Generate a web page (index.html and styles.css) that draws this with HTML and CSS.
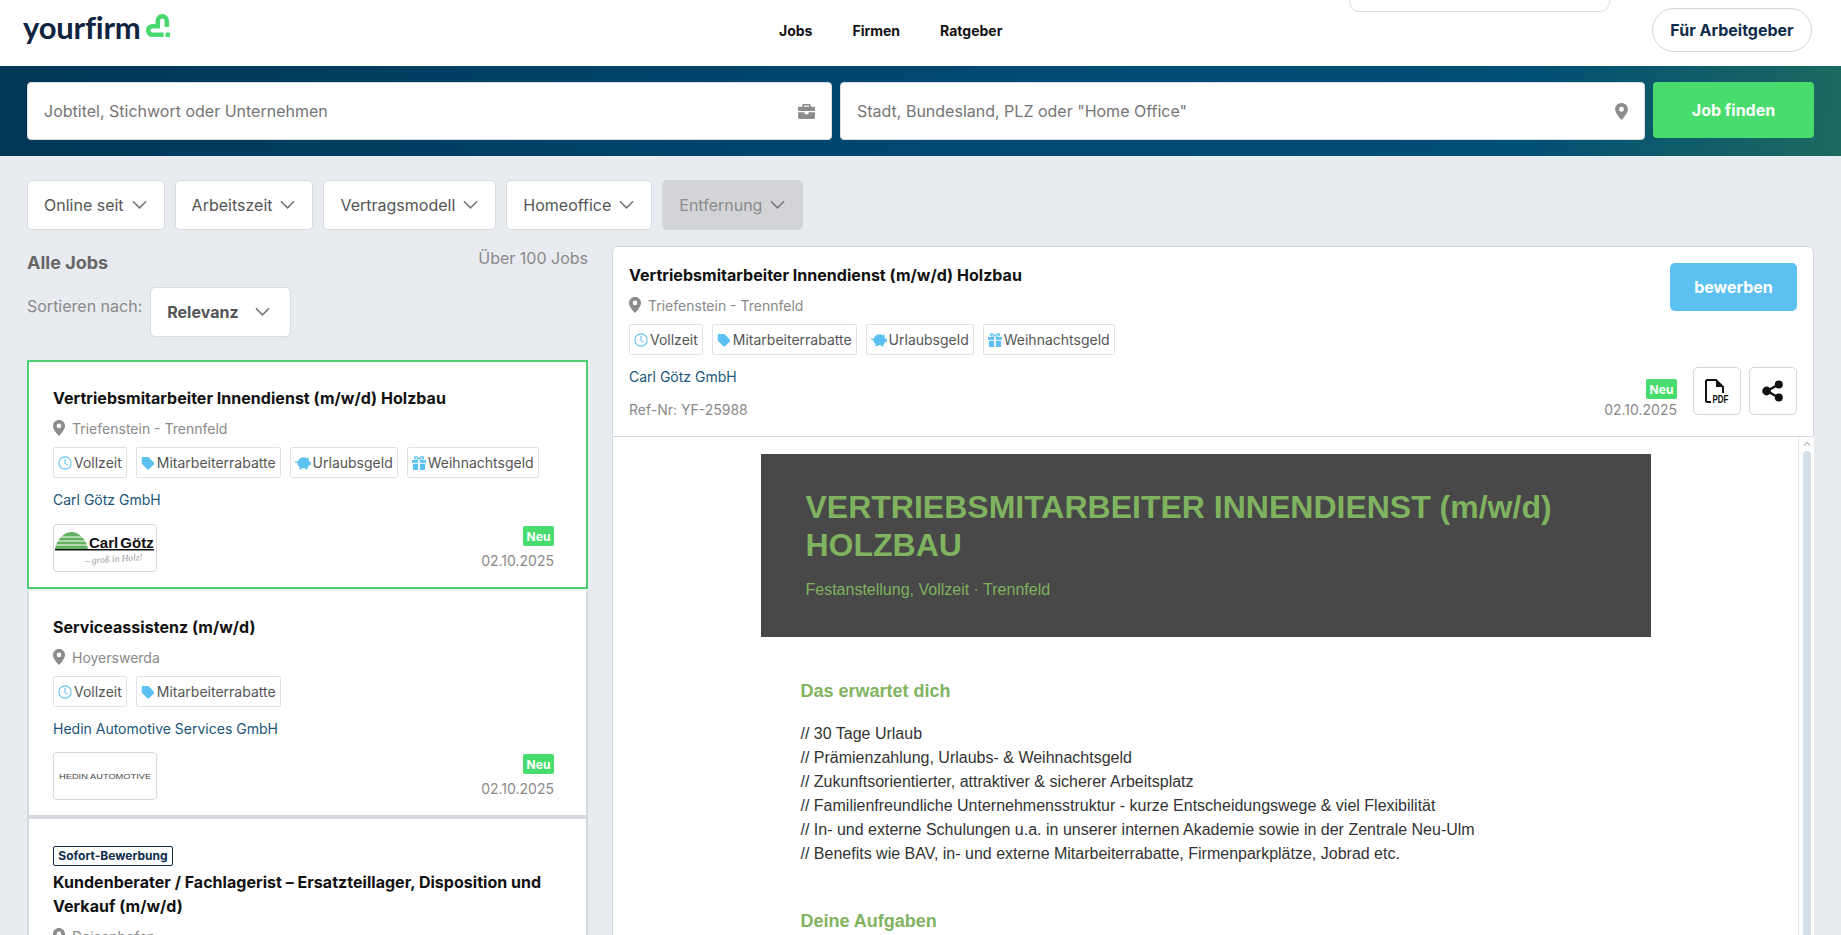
FILE: index.html
```html
<!DOCTYPE html>
<html lang="de">
<head>
<meta charset="utf-8">
<title>yourfirm Jobs</title>
<link rel="stylesheet" href="styles.css">
</head>
<body>
<svg class="sprite" xmlns="http://www.w3.org/2000/svg">
  <symbol id="pin" viewBox="0 0 12 16"><path fill-rule="evenodd" d="M6 0C2.7 0 0 2.6 0 5.900 0 9.600 4.200 14 6 16c1.800-2 6-6.400 6-10.100C12 2.600 9.300 0 6 0zm0 3.600a2.300 2.300 0 1 1 0 4.600 2.300 2.300 0 0 1 0-4.600z"/></symbol>
  <symbol id="case" viewBox="0 0 18 16"><path d="M6 0h6a1.500 1.500 0 0 1 1.500 1.500V3H18v4.500H0V3h4.500V1.500A1.500 1.500 0 0 1 6 0zm.3 1.600V3h5.400V1.600zM0 8.800h7V11h4V8.800h7V14a2 2 0 0 1-2 2H2a2 2 0 0 1-2-2z"/></symbol>
  <symbol id="chev" viewBox="0 0 16 10"><path d="M1.500 1.500 8 8l6.500-6.500" fill="none" stroke="currentColor" stroke-width="1.700" stroke-linecap="round" stroke-linejoin="round"/></symbol>
  <symbol id="clock" viewBox="0 0 16 16"><circle cx="8" cy="8" r="7" fill="none" stroke="currentColor" stroke-width="1.200"/><path d="M8 3.500V8.500l3 2" fill="none" stroke="currentColor" stroke-width="1.200"/></symbol>
  <symbol id="tag" viewBox="0 0 16 16"><path d="M1 1.800C1 1.300 1.300 1 1.800 1h5.700c.5 0 .9.200 1.200.5l6 6c.6.600.6 1.500 0 2.100l-5.400 5.400c-.6.600-1.500.6-2.100 0l-6-6C.9 8.700.8 8.300.8 7.800z"/></symbol>
  <symbol id="pig" viewBox="0 0 18 16"><path d="M10 1.500c1.200 0 2.300.4 3.200 1l2.300-1-.3 3c.6.700 1 1.400 1.200 2.200H18v3.600h-1.900c-.4.900-1 1.600-1.800 2.200V15h-3v-1.200H8V15H5v-2.500C3.500 11.400 2.600 9.800 2.600 8H1.500C.600 8 0 7.400 0 6.500 0 6 .4 5.700.8 5.700c.4 0 .6.300.6.700 0 .2.100.3.300.3h1.200C3.700 3.500 6.500 1.500 10 1.500z"/></symbol>
  <symbol id="gift" viewBox="0 0 16 16"><path d="M0 4.500h7v3.200H0zM9 4.500h7v3.200H9zM1 8.800h6V16H2.200A1.200 1.200 0 0 1 1 14.800zM9 8.800h6v6a1.200 1.200 0 0 1-1.200 1.200H9zM4.500 0C6 0 7.300 1.300 8 3 8.700 1.300 10 0 11.500 0 13 0 13.800 1 13.800 2c0 1.200-1 2-2.200 2H4.400C3.200 4 2.200 3.200 2.200 2 2.200 1 3 0 4.500 0zm0 1.300c-.6 0-.9.300-.9.700 0 .5.400.8.900.8h2.300C6.300 2 5.500 1.300 4.500 1.300zm7 0c-1 0-1.800.7-2.300 1.500h2.300c.5 0 .9-.3.900-.8 0-.4-.3-.7-.9-.7z"/></symbol>
</svg>

<header class="topbar">
  <a class="logo">
    <span class="logo-word">yourfirm</span>
    <svg class="logo-mark" viewBox="0 0 25 25"><path d="M20.800 13V6.750a4.500 4.500 0 0 0-9 0v5.450H6.500a4.300 4.300 0 0 0 0 8.600H17.500" fill="none" stroke="#48d96e" stroke-width="4.500"/><rect x="19.500" y="18.500" width="4.500" height="4.500" rx="1" fill="#48d96e"/></svg>
  </a>
  <nav class="mainnav">
    <a>Jobs</a>
    <a>Firmen</a>
    <a>Ratgeber</a>
  </nav>
  <a class="employer">Für Arbeitgeber</a>
  <div class="dropdown-tail"></div>
</header>

<section class="searchband">
  <div class="field">
    <span>Jobtitel, Stichwort oder Unternehmen</span>
    <svg class="field-icon case"><use href="#case"/></svg>
  </div>
  <div class="field">
    <span>Stadt, Bundesland, PLZ oder "Home Office"</span>
    <svg class="field-icon pin"><use href="#pin"/></svg>
  </div>
  <button class="find">Job finden</button>
</section>

<main class="page">
  <div class="filters">
    <div class="select">Online seit<svg class="chev"><use href="#chev"/></svg></div>
    <div class="select">Arbeitszeit<svg class="chev"><use href="#chev"/></svg></div>
    <div class="select">Vertragsmodell<svg class="chev"><use href="#chev"/></svg></div>
    <div class="select">Homeoffice<svg class="chev"><use href="#chev"/></svg></div>
    <div class="select disabled">Entfernung<svg class="chev"><use href="#chev"/></svg></div>
  </div>

  <div class="columns">
    <aside class="results">
      <div class="results-head">
        <h2 class="all">Alle Jobs</h2>
        <span class="count">Über 100 Jobs</span>
      </div>
      <div class="sort">
        <span class="sort-label">Sortieren nach:</span>
        <div class="select strong">Relevanz<svg class="chev"><use href="#chev"/></svg></div>
      </div>

      <article class="card active">
        <h3 class="job-title">Vertriebsmitarbeiter Innendienst (m/w/d) Holzbau</h3>
        <div class="loc"><svg class="loc-pin"><use href="#pin"/></svg>Triefenstein - Trennfeld</div>
        <div class="tags">
          <span class="tag"><svg class="ti"><use href="#clock"/></svg>Vollzeit</span>
          <span class="tag"><svg class="ti"><use href="#tag"/></svg>Mitarbeiterrabatte</span>
          <span class="tag"><svg class="ti wide"><use href="#pig"/></svg>Urlaubsgeld</span>
          <span class="tag"><svg class="ti"><use href="#gift"/></svg>Weihnachtsgeld</span>
        </div>
        <div class="company">Carl Götz GmbH</div>
        <div class="foot">
          <div class="brand">
            <svg class="brand-art" viewBox="0 0 102 46">
              <path d="M1 24C3 13 11 7 17.500 7S32 13 34 24z" fill="#63b063"/>
              <path d="M3 12h30M1 16h34M1 20h34" stroke="#fff" stroke-width="1.200"/>
              <rect x="1" y="24" width="99" height="1.500" fill="#111"/>
              <text class="cg-name" x="35" y="22.500">Carl Götz</text>
              <text class="cg-claim" x="31" y="39" transform="rotate(-4 31 39)">– groß in Holz!</text>
            </svg>
          </div>
          <div class="meta"><span class="neu">Neu</span><span class="date">02.10.2025</span></div>
        </div>
      </article>

      <article class="card">
        <h3 class="job-title">Serviceassistenz (m/w/d)</h3>
        <div class="loc"><svg class="loc-pin"><use href="#pin"/></svg>Hoyerswerda</div>
        <div class="tags">
          <span class="tag"><svg class="ti"><use href="#clock"/></svg>Vollzeit</span>
          <span class="tag"><svg class="ti"><use href="#tag"/></svg>Mitarbeiterrabatte</span>
        </div>
        <div class="company">Hedin Automotive Services GmbH</div>
        <div class="foot">
          <div class="brand"><span class="hedin">HEDIN AUTOMOTIVE</span></div>
          <div class="meta"><span class="neu">Neu</span><span class="date">02.10.2025</span></div>
        </div>
      </article>

      <article class="card">
        <span class="instant">Sofort-Bewerbung</span>
        <h3 class="job-title">Kundenberater / Fachlagerist – Ersatzteillager, Disposition und Verkauf (m/w/d)</h3>
        <div class="loc"><svg class="loc-pin"><use href="#pin"/></svg>Deisenhofen</div>
      </article>
    </aside>

    <section class="detail">
      <header class="detail-head">
        <div class="detail-info">
          <h1 class="job-title">Vertriebsmitarbeiter Innendienst (m/w/d) Holzbau</h1>
          <div class="loc"><svg class="loc-pin"><use href="#pin"/></svg>Triefenstein - Trennfeld</div>
          <div class="tags">
            <span class="tag"><svg class="ti"><use href="#clock"/></svg>Vollzeit</span>
            <span class="tag"><svg class="ti"><use href="#tag"/></svg>Mitarbeiterrabatte</span>
            <span class="tag"><svg class="ti wide"><use href="#pig"/></svg>Urlaubsgeld</span>
            <span class="tag"><svg class="ti"><use href="#gift"/></svg>Weihnachtsgeld</span>
          </div>
          <div class="company">Carl Götz GmbH</div>
          <div class="ref">Ref-Nr: YF-25988</div>
        </div>
        <div class="detail-actions">
          <button class="apply">bewerben</button>
          <div class="action-row">
            <div class="meta tight"><span class="neu">Neu</span><span class="date">02.10.2025</span></div>
            <div class="square">
              <svg class="pdf" viewBox="0 0 24 24"><path d="M6 23H2.500A1.500 1.500 0 0 1 1 21.500V2.500A1.500 1.500 0 0 1 2.500 1H11l7 7v6" fill="none" stroke="#111" stroke-width="2"/><path d="M11 1v7h7z" fill="#111"/><text class="pdf-text" x="7.500" y="24" textLength="16" lengthAdjust="spacingAndGlyphs">PDF</text></svg>
            </div>
            <div class="square">
              <svg class="share" viewBox="0 0 22 22"><path d="M16.500 4.500 5 11l11.500 6.500" fill="none" stroke="#111" stroke-width="2.400"/><circle cx="16.800" cy="4.400" r="4" fill="#111"/><circle cx="4.600" cy="11" r="4.400" fill="#111"/><circle cx="16.800" cy="17.600" r="4" fill="#111"/></svg>
            </div>
          </div>
        </div>
      </header>

      <div class="detail-body">
        <div class="doc">
          <div class="doc-hero">
            <h2 class="hero-title">VERTRIEBSMITARBEITER INNENDIENST (m/w/d) HOLZBAU</h2>
            <p class="hero-sub">Festanstellung, Vollzeit · Trennfeld</p>
          </div>
          <div class="doc-text">
            <h3 class="doc-h">Das erwartet dich</h3>
            <ul class="doc-list">
              <li>// 30 Tage Urlaub</li>
              <li>// Prämienzahlung, Urlaubs- &amp; Weihnachtsgeld</li>
              <li>// Zukunftsorientierter, attraktiver &amp; sicherer Arbeitsplatz</li>
              <li>// Familienfreundliche Unternehmensstruktur - kurze Entscheidungswege &amp; viel Flexibilität</li>
              <li>// In- und externe Schulungen u.a. in unserer internen Akademie sowie in der Zentrale Neu-Ulm</li>
              <li>// Benefits wie BAV, in- und externe Mitarbeiterrabatte, Firmenparkplätze, Jobrad etc.</li>
            </ul>
            <h3 class="doc-h second">Deine Aufgaben</h3>
          </div>
        </div>
        <div class="scrollbar"><svg class="scroll-up" viewBox="0 0 10 6"><path d="M1 5l4-4 4 4" fill="none" stroke="#b5b5b5" stroke-width="1.500"/></svg><div class="thumb"></div></div>
      </div>
    </section>
  </div>
</main>
</body>
</html>
```
FILE: styles.css
```css
* { box-sizing: border-box; }
html, body { margin: 0; height: 935px; overflow: hidden; }
body { background: #e8ebf0; font-family: Inter, "Liberation Sans", sans-serif; color: #555; font-size: 14px; }
h1, h2, h3, p, ul { margin: 0; padding: 0; }
ul { list-style: none; }
button { font-family: inherit; border: 0; cursor: pointer; }
.sprite { display: none; }

/* top bar */
.topbar { position: relative; height: 66px; background: #fff; display: flex; align-items: center; padding: 0 29px 0 23px; overflow: hidden; }
.logo { display: flex; align-items: flex-start; width: 756px; height: 50px; margin-top: -18px; padding-top: 9px; }
.logo-word { font-family: Lato, sans-serif; font-weight: 700; font-size: 31px; line-height: 38px; letter-spacing: -.2px; color: #10243f; }
.logo-mark { width: 25px; height: 25px; margin: 6px 0 0 5px; }
.mainnav { display: flex; gap: 40px; margin-top: -4px; }
.mainnav a { font-size: 14px; font-weight: 700; color: #111; line-height: 20px; }
.employer { margin-left: auto; width: 160px; height: 44px; margin-top: -6px; border: 1px solid #d5d5d5; border-radius: 22px; display: flex; align-items: center; justify-content: center; font-size: 16px; font-weight: 700; color: #0e2c4a; }
.dropdown-tail { position: absolute; left: 1349px; top: -20px; width: 261px; height: 32px; background: #fff; border: 1px solid #dcdcdc; border-radius: 10px; }

/* search */
.searchband { height: 90px; padding: 16px 27px 0; display: flex; gap: 8px; align-items: flex-start; background: linear-gradient(100deg, #003656 0%, #004a74 55%, #004d76 82%, #1d6a60 100%); }
.field { flex: 0 0 805px; height: 58px; background: #fff; border-radius: 4px; border: 1px solid #d9dee4; display: flex; align-items: center; justify-content: space-between; padding: 0 16px; font-size: 16px; color: #757575; }
.field-icon { fill: #8c8c8c; }
.field-icon.case { width: 17px; height: 15px; }
.field-icon.pin { width: 13px; height: 17px; }
.find { flex: 0 0 161px; height: 56px; background: #48dc6e; color: #fff; font-size: 16px; font-weight: 700; border-radius: 4px; }

/* page */
.page { padding: 24px 27px 0; }
.filters { display: flex; gap: 10px; }
.select { height: 50px; padding: 0 17px 0 16px; display: flex; align-items: center; gap: 8px; background: #fff; border: 1px solid #d8dade; border-radius: 5px; font-size: 16px; color: #555; white-space: nowrap; }
.select.disabled { background: #d2d4d8; border-color: #d2d4d8; color: #8c8c8c; }
.select.strong { font-weight: 700; padding-right: 20px; gap: 16px; }
.chev { width: 15px; height: 10px; color: #777; }
.columns { display: flex; gap: 24px; align-items: flex-start; margin-top: 16px; }

/* results */
.results { flex: 0 0 561px; }
.results-head { display: flex; justify-content: space-between; align-items: flex-start; }
.all { margin-top: 5px; font-size: 18px; line-height: 24px; font-weight: 700; color: #666; }
.count { margin-top: 1px; font-size: 16px; line-height: 22px; color: #8a8a8a; }
.sort { display: flex; gap: 8px; align-items: flex-start; margin-top: 12px; }
.sort-label { margin-top: 8px; font-size: 16px; line-height: 22px; color: #8a8a8a; }
.card { background: #fff; border: 2px solid #d5d8dc; padding: 23px 24px 15px; }
.card.active + .card { margin-top: 1px; border-top-color: #f6faf7; }
.card.active { margin-top: 23px; border-color: #4fd073; padding-top: 24px; }
.job-title { font-size: 16px; line-height: 24px; font-weight: 700; letter-spacing: .03px; color: #111; }
.loc { margin-top: 7px; height: 22px; display: flex; align-items: center; font-size: 14px; color: #8a8a8a; }
.loc-pin { width: 12px; height: 16px; margin-right: 7px; fill: #8c8c8c; }
.tags { display: flex; gap: 9px; margin-top: 8px; }
.tag { height: 31px; padding: 0 4px; display: flex; align-items: center; gap: 2px; background: #fff; border: 1px solid #e2e2e2; border-radius: 2px; font-size: 14px; color: #555; white-space: nowrap; }
.ti { width: 14px; height: 14px; color: #5cc1f0; fill: #5cc1f0; }
.ti.wide { width: 16px; }
.company { margin-top: 11px; line-height: 22px; font-size: 14px; color: #1a5578; }
.foot { display: flex; justify-content: space-between; align-items: flex-start; margin-top: 12px; padding-right: 8px; }
.card.active .foot { margin-top: 13px; }
.brand { width: 104px; height: 48px; border: 1px solid #d8d8d8; border-radius: 4px; display: flex; align-items: center; justify-content: center; overflow: hidden; }
.brand-art { width: 102px; height: 46px; }
.cg-name { font-family: "Liberation Sans", sans-serif; font-weight: 700; font-size: 15px; word-spacing: -2px; fill: #111; }
.cg-claim { font-family: "Liberation Serif", serif; font-style: italic; font-size: 9.500px; fill: #999; }
.hedin { font-family: "Liberation Sans", sans-serif; font-size: 8px; letter-spacing: .05px; color: #444; transform: scaleX(1.15); white-space: nowrap; }
.meta { display: flex; flex-direction: column; align-items: flex-end; margin-top: 2px; }
.neu { width: 31px; height: 20px; background: #48dc6e; border-radius: 2px; color: #fff; font-size: 12px; font-weight: 700; display: flex; align-items: center; justify-content: center; }
.date { margin-top: 4px; line-height: 22px; font-size: 14px; color: #8a8a8a; }
.instant { display: block; width: 120px; height: 20px; margin-top: 4px; border: 1px solid #0e2c4a; border-radius: 2px; font-size: 12px; font-weight: 700; line-height: 18px; text-align: center; color: #0e2c4a; }
.instant + .job-title { margin-top: 4px; }

/* detail */
.detail { flex: 0 0 1202px; background: #fff; height: 700px; border-radius: 6px 6px 0 0; }
.detail-head { height: 191px; border: 1px solid #d5d8dc; border-radius: 6px 6px 0 0; padding: 16px 16px 0 16px; display: flex; justify-content: space-between; }
.detail-actions { display: flex; flex-direction: column; align-items: flex-end; justify-content: space-between; height: 152px; }
.apply { width: 127px; height: 48px; background: #5cc1f0; color: #fff; font-size: 16px; font-weight: 700; border-radius: 5px; }
.action-row { display: flex; gap: 8px; align-items: flex-start; height: 48px; }
.meta.tight { margin: 12px 8px 0 0; }
.meta.tight .date { margin-top: 0; }
.square { width: 48px; height: 48px; border: 1px solid #d5d5d5; border-radius: 5px; display: flex; align-items: center; justify-content: center; background: #fff; }
.pdf { width: 24px; height: 24px; overflow: visible; }
.pdf-text { font-family: "Liberation Sans", sans-serif; font-weight: 700; font-size: 10px; fill: #111; }
.share { width: 22px; height: 22px; }
.ref { margin-top: 11px; line-height: 22px; font-size: 14px; color: #8a8a8a; }

.detail-body { display: flex; height: 498px; overflow: hidden; border-left: 1px solid #d5d8dc; }
.doc { flex: 1; padding-top: 17px; font-family: "Liberation Sans", Arial, sans-serif; }
.doc-hero { width: 890px; height: 183px; margin: 0 auto; padding: 34px 45px 0; background: #484848; }
.hero-title { font-size: 32px; line-height: 38px; font-weight: 700; color: #7fb35f; }
.hero-sub { margin-top: 14px; font-size: 16px; line-height: 24px; color: #7fb35f; }
.doc-text { width: 890px; margin: 0 auto; padding: 42px 40px 0; }
.doc-h { font-size: 18px; line-height: 24px; font-weight: 700; color: #7fb35f; }
.doc-h.second { margin-top: 43px; }
.doc-list { margin-top: 19px; font-size: 16px; line-height: 24px; color: #333; }
.scrollbar { flex: 0 0 16px; border-left: 1px solid #e4e6ea; display: flex; flex-direction: column; align-items: center; padding-top: 4px; }
.scroll-up { width: 8px; height: 6px; }
.thumb { width: 8px; flex: 1; margin-top: 4px; background: #d5dfe8; border-radius: 4px 4px 0 0; }
```
